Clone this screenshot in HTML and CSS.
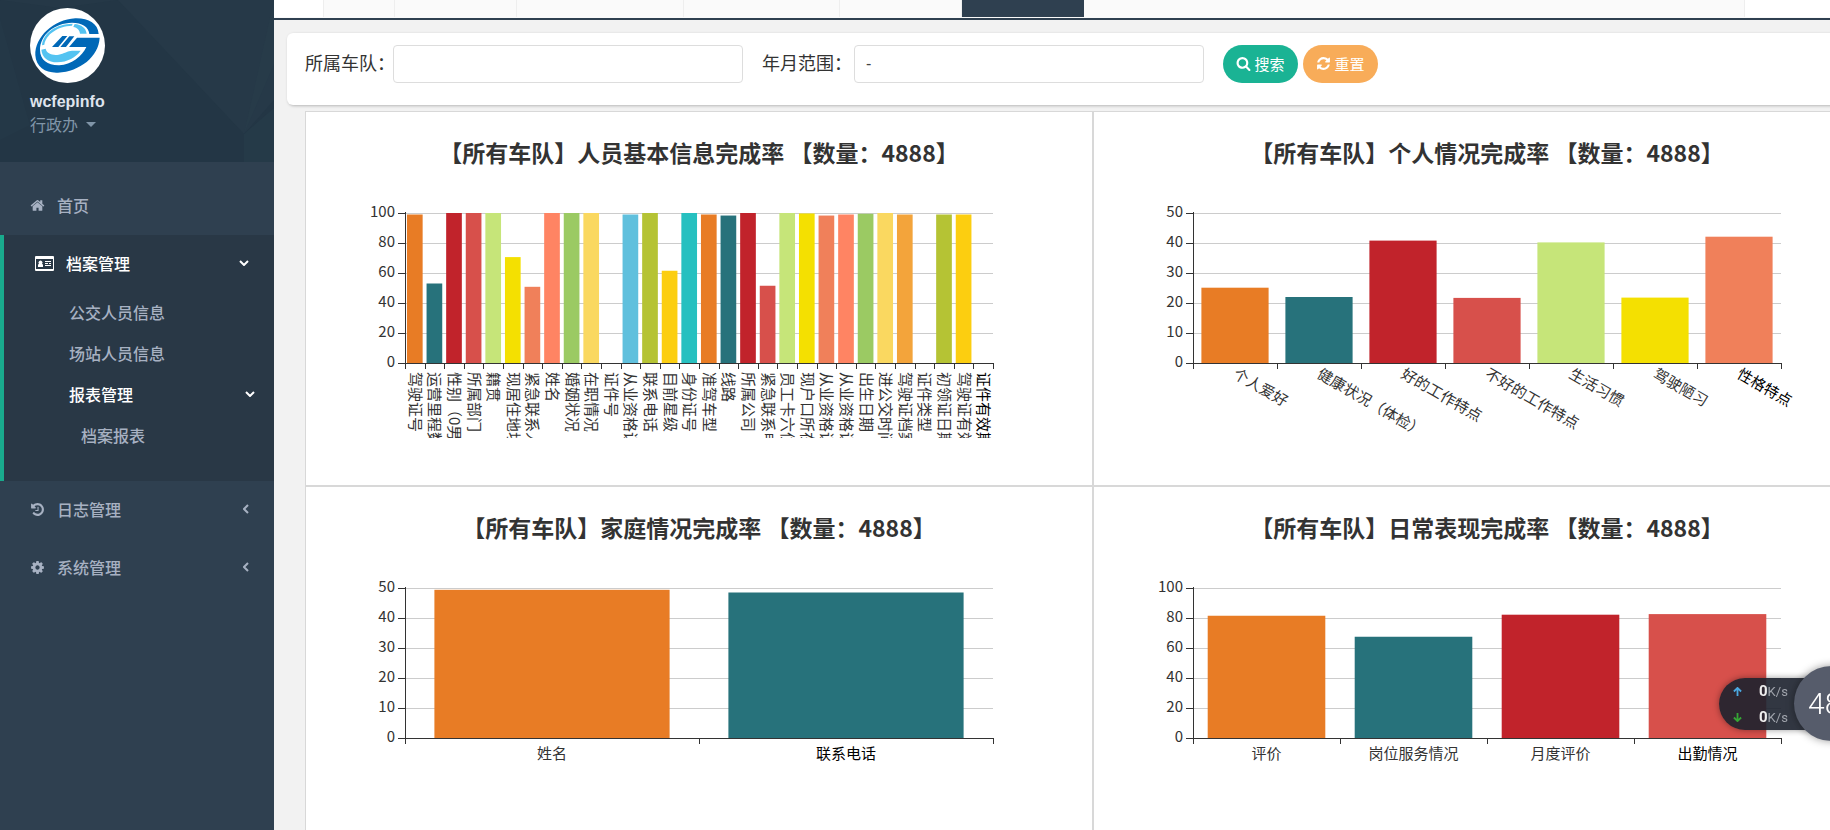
FILE: index.html
```html
<!DOCTYPE html>
<html lang="zh-CN">
<head>
<meta charset="utf-8">
<title>档案报表</title>
<link rel="stylesheet" href="styles.css">
</head>
<body>
<div class="app">
  <aside class="sidebar">
    <header class="profile">
      <svg class="profile-pattern" viewBox="0 0 274 162" preserveAspectRatio="none" aria-hidden="true">
        <rect width="274" height="162" fill="#233645"/>
        <path d="M118 0H274V100L244 134Z" fill="#263948"/>
        <path d="M244 134L274 108V162H244Z" fill="#253a48"/>
        <path d="M0 18L30 125L0 140Z" fill="#243847"/>
        <path d="M274 0V64L244 134Z" fill="#273b49"/>
        <path d="M0 0H118L60 8Z" fill="#253847"/>
      </svg>
      <svg class="logo" viewBox="90 24 225 225" role="img" aria-label="logo">
        <circle cx="202.500" cy="136.500" r="112.500" fill="#fff"/>
        <path fill="#0068b7" d="M296 102C294 70 265 54 226 55C160 58 104 112 106 166C108 202 138 220 174 218C240 214 296 170 299 113H231L207 141H259C246 170 214 194 178 196C144 197 120 180 120 150C120 104 164 69 216 68C246 68 266 80 268 102Z"/>
        <path fill="#54c3f1" d="M126 136C130 98 168 72 218 71L216 77C172 79 138 103 133 134ZM224 72C244 74 258 84 260 101H240C239 91 232 83 220 81ZM124 149L137 146C140 160 156 167 176 164C192 161 204 152 216 152H242C228 172 202 186 172 187C144 187 126 172 124 149Z"/>
        <path fill="#0068b7" d="M187 108H202L175 141H156ZM208 109H223L198 141H181Z"/>
      </svg>
      <strong class="user-name">wcfepinfo</strong>
      <a class="user-role" href="#">行政办 <span class="caret"></span></a>
    </header>
    <nav class="menu">
      <a class="item" href="#">
        <svg class="icon" viewBox="0 0 1792 1792"><path d="M1472 992v480q0 26-19 45t-45 19h-384v-384h-256v384h-384q-26 0-45-19t-19-45v-480q0-1 .5-3t.5-3l575-474 575 474q1 2 1 6zm223-69l-62 74q-8 9-21 11h-3q-13 0-21-7l-692-577-692 577q-12 8-24 7-13-2-21-11l-62-74q-8-10-7-23.5t11-21.5l719-599q32-26 76-26t76 26l244 204v-195q0-14 9-23t23-9h192q14 0 23 9t9 23v408l219 182q10 8 11 21.5t-7 23.5z"/></svg>
        <span>首页</span>
      </a>
      <div class="group">
        <a class="item on" href="#">
          <svg class="icon wide" viewBox="0 0 19 15"><path fill-rule="evenodd" d="M1 0H18Q19 0 19 1V14Q19 15 18 15H1Q0 15 0 14V1Q0 0 1 0ZM1 3V13H18V3ZM3 11V9Q3 8 4 8A2 2 0 1 1 7 8Q8 8 8 9V11ZM10 5H16V6H10ZM10 7H13V8H10ZM14 7H16V8H14ZM10 9H16V10H10Z"/></svg>
          <span>档案管理</span>
          <svg class="arrow down" viewBox="0 0 10 6"><path d="M1 1L5 5L9 1"/></svg>
        </a>
        <a class="item sub" href="#">公交人员信息</a>
        <a class="item sub" href="#">场站人员信息</a>
        <a class="item sub on" href="#"><span>报表管理</span>
          <svg class="arrow down" viewBox="0 0 10 6"><path d="M1 1L5 5L9 1"/></svg>
        </a>
        <a class="item sub third" href="#">档案报表</a>
      </div>
      <a class="item" href="#">
        <svg class="icon" viewBox="0 0 1792 1792"><path d="M1664 896q0 156-61 298t-164 245-245 164-298 61q-172 0-327-72.5t-264-204.5q-7-10-6.5-22.5t8.5-20.5l137-138q10-9 25-9 16 2 23 12 73 95 179 147t225 52q104 0 198.5-40.5t163.5-109.5 109.5-163.5 40.5-198.5-40.5-198.5-109.5-163.5-163.5-109.5-198.5-40.5q-98 0-188 35.5t-160 101.5l137 138q31 30 14 69-17 40-59 40h-448q-26 0-45-19t-19-45v-448q0-42 40-59 39-17 69 14l130 129q107-101 244.5-156.5t284.5-55.5q156 0 298 61t245 164 164 245 61 298zm-640-288v448q0 14-9 23t-23 9h-320q-14 0-23-9t-9-23v-64q0-14 9-23t23-9h224v-352q0-14 9-23t23-9h64q14 0 23 9t9 23z"/></svg>
        <span>日志管理</span>
        <svg class="arrow left" viewBox="0 0 6 10"><path d="M5 1L1 5L5 9"/></svg>
      </a>
      <a class="item" href="#">
        <svg class="icon" viewBox="0 0 1792 1792"><path d="M1152 896q0-106-75-181t-181-75-181 75-75 181 75 181 181 75 181-75 75-181zm512-109v222q0 12-8 23t-20 13l-185 28q-19 54-39 91 35 50 107 138 10 12 10 25t-9 23q-27 37-99 108t-94 71q-12 0-26-9l-138-108q-44 23-91 38-16 136-29 186-7 28-36 28h-222q-14 0-24.5-8.5t-11.5-21.5l-28-184q-49-16-90-37l-141 107q-10 9-25 9-14 0-25-11-126-114-165-168-7-10-7-23 0-12 8-23 15-21 51-66.5t54-70.5q-27-50-41-99l-183-27q-13-2-21-12.5t-8-23.5v-222q0-12 8-23t19-13l186-28q14-46 39-92-40-57-107-138-10-12-10-24 0-10 9-23 26-36 98.5-107.5t94.500-71.500q13 0 26 10l138 107q44-23 91-38 16-136 29-186 7-28 36-28h222q14 0 24.5 8.5t11.5 21.5l28 184q49 16 90 37l142-107q9-9 24-9 13 0 25 10 129 119 165 170 7 8 7 22 0 12-8 23-15 21-51 66.5t-54 70.5q26 50 41 98l183 28q13 2 21 12.5t8 23.5z"/></svg>
        <span>系统管理</span>
        <svg class="arrow left" viewBox="0 0 6 10"><path d="M5 1L1 5L5 9"/></svg>
      </a>
    </nav>
  </aside>

  <main class="main">
    <div class="tabs">
      <span class="tab-end"></span>
      <span class="tab small"></span>
      <span class="tab mid"></span>
      <span class="tab large"></span>
      <span class="tab regular"></span>
      <span class="tab mid"></span>
      <span class="tab mid active"></span>
      <span class="tab-end right"></span>
    </div>

    <form class="search">
      <label for="fleet">所属车队：</label>
      <input id="fleet" class="field" type="text">
      <label for="range" class="second">年月范围：</label>
      <input id="range" class="field" type="text" placeholder="-">
      <button type="button" class="btn green">
        <svg viewBox="0 0 1792 1792"><path d="M1216 832q0-185-131.5-316.5t-316.5-131.5-316.5 131.5-131.5 316.5 131.5 316.5 316.5 131.5 316.5-131.5 131.5-316.5zm512 832q0 52-38 90t-90 38q-54 0-90-38l-343-342q-179 124-399 124-143 0-273.5-55.5t-225-150-150-225-55.5-273.5 55.5-273.5 150-225 225-150 273.5-55.5 273.5 55.5 225 150 150 225 55.5 273.5q0 220-124 399l343 343q37 37 37 90z"/></svg>
        <span>搜索</span>
      </button>
      <button type="button" class="btn orange">
        <svg viewBox="0 0 1792 1792"><path d="M1639 1056q0 5-1 7-64 268-268 434.5t-478 166.5q-146 0-282.5-55t-243.5-157l-129 129q-19 19-45 19t-45-19-19-45v-448q0-26 19-45t45-19h448q26 0 45 19t19 45-19 45l-137 137q71 66 161 102t187 36q134 0 250-65t186-179q11-17 53-117 8-23 30-23h192q13 0 22.5 9.5t9.5 22.5zm25-800v448q0 26-19 45t-45 19h-448q-26 0-45-19t-19-45 19-45l138-138q-148-137-349-137-134 0-250 65t-186 179q-11 17-53 117-8 23-30 23h-199q-13 0-22.5-9.5t-9.5-22.5v-7q65-268 270-434.5t480-166.500q146 0 284 55.5t245 156.5l130-129q19-19 45-19t45 19 19 45z"/></svg>
        <span>重置</span>
      </button>
    </form>

    <div class="charts">
      <section class="chart"><h2>【所有车队】人员基本信息完成率 【数量：4888】</h2><svg class="plot" id="basic"></svg></section>
      <section class="chart"><h2>【所有车队】个人情况完成率 【数量：4888】</h2><svg class="plot" id="personal"></svg></section>
      <section class="chart"><h2>【所有车队】家庭情况完成率 【数量：4888】</h2><svg class="plot" id="family"></svg></section>
      <section class="chart"><h2>【所有车队】日常表现完成率 【数量：4888】</h2><svg class="plot" id="daily"></svg></section>
    </div>
  </main>
</div>

<div class="monitor">
  <div class="speeds">
    <div class="speed"><svg class="up" viewBox="0 0 10 10"><path d="M5 10V2M1 5L5 1L9 5"/></svg><b>0</b><span>K/s</span></div>
    <div class="speed"><svg class="dn" viewBox="0 0 10 10"><path d="M5 0V8M1 5L5 9L9 5"/></svg><b>0</b><span>K/s</span></div>
  </div>
  <div class="ball">48</div>
</div>
<script src="charts.js"></script>
</body>
</html>
```
FILE: styles.css
```css
* { box-sizing: border-box; }
body {
  margin: 0;
  height: 100vh;
  overflow: hidden;
  background: #f2f2f2;
  color: #333;
  font-family: "Noto Sans CJK SC", sans-serif;
  font-size: 16px;
}
a { color: inherit; text-decoration: none; }
.app { display: flex; height: 100vh; }

/* sidebar */
.sidebar { flex: 0 0 274px; background: #2f4050; color: #a7b1c2; }
.profile {
  position: relative;
  display: flex;
  flex-direction: column;
  align-items: flex-start;
  height: 162px;
  padding: 8px 30px;
}
.profile-pattern { position: absolute; inset: 0; width: 100%; height: 100%; }
.logo { position: relative; width: 75px; height: 75px; }
.user-name {
  position: relative;
  margin-top: 7px;
  color: #dfe4ed;
  font: bold 16px/24px "Liberation Sans", sans-serif;
}
.user-role {
  position: relative;
  display: flex;
  align-items: center;
  gap: 8px;
  line-height: 20px;
  color: #8095a8;
}
.caret { border: 5px solid transparent; border-top-color: currentColor; border-bottom: 0; }
.menu { padding-top: 15px; font-weight: 500; }
.item {
  display: flex;
  align-items: center;
  height: 58px;
  padding: 0 25px 2px 30px;
}
.icon { width: 15px; height: 15px; margin-right: 12px; fill: currentColor; }
.icon.wide { width: 19px; height: 15px; margin-left: 1px; margin-right: 12px; }
.group { padding-bottom: 24px; border-left: 4px solid #19aa8d; background: #293846; }
.group .item.on { color: #fff; }
.sub { height: 41px; padding: 0 19px 4px 65px; }
.sub.third { padding-left: 77px; }
.arrow { margin-left: auto; fill: none; stroke: currentColor; stroke-width: 2; }
.arrow.down { width: 10px; height: 6px; }
.arrow.left { width: 6px; height: 10px; }

/* tabs */
.main { flex: 1; min-width: 0; }
.tabs {
  display: flex;
  height: 20px;
  padding-bottom: 1px;
  border-bottom: 2px solid #2f4050;
  background: #fafafa;
}
.tab, .tab-end { border-right: 1px solid #eee; }
.tab-end { width: 50px; background: #fff; }
.tab-end.right { width: 86px; margin-left: auto; border-right: 0; border-left: 1px solid #eee; }
.tab.small { width: 71px; }
.tab.mid { width: 122px; }
.tab.large { width: 167px; }
.tab.regular { width: 156px; }
.tab.active { background: #2f4050; border: 0; }

/* search form */
.search {
  display: flex;
  align-items: flex-start;
  height: 72px;
  margin: 13px -30px 0 13px;
  padding: 12px 18px;
  border-radius: 6px;
  background: #fff;
  box-shadow: 1px 1px 3px rgba(0, 0, 0, .25);
}
.search label { width: 88px; font-size: 18px; line-height: 34px; white-space: nowrap; }
.search .second { width: 92px; margin-left: 19px; }
.field {
  width: 350px;
  height: 38px;
  padding: 0 11px;
  border: 1px solid #ddd;
  border-radius: 4px;
  background: #fff;
  font: 16px "Liberation Sans", "Noto Sans CJK SC", sans-serif;
}
.field::placeholder { color: #444; }
.btn {
  display: flex;
  align-items: center;
  justify-content: center;
  gap: 3px;
  width: 75px;
  height: 38px;
  margin-left: 5px;
  padding: 0 0 2px;
  border: 0;
  border-radius: 19px;
  color: #fff;
  font: 15px "Noto Sans CJK SC", sans-serif;
}
.btn svg { width: 15px; height: 15px; fill: currentColor; }
.btn.green { margin-left: 19px; background: #1ab394; }
.btn.orange { background: #f8ac59; }

/* charts */
.charts {
  display: grid;
  grid-template-columns: 1fr 1fr;
  margin: 6px -51px 0 31px;
  background: #fff;
}
.chart { min-width: 0; height: 375px; border: 1px solid #d8d8d8; }
.chart h2 {
  margin: 0;
  padding-top: 25px;
  padding-bottom: 1px;
  font-size: 23px;
  line-height: 30px;
  text-align: center;
  white-space: nowrap;
}
.plot { display: block; width: 100%; }
.grid-line { stroke: #ccc; shape-rendering: crispEdges; }
.axis { stroke: #333; shape-rendering: crispEdges; }
.plot text { fill: #333; font-size: 15px; }
.plot .last { fill: #000; }

/* floating network monitor */
.monitor {
  position: fixed;
  right: -39px;
  top: 666px;
  display: flex;
  align-items: center;
  font-family: Roboto, sans-serif;
}
.speeds {
  width: 112px;
  height: 52px;
  margin-right: -37px;
  border-radius: 26px 0 0 26px;
  background: rgba(28, 33, 45, .9);
  box-shadow: 0 0 6px rgba(0, 0, 0, .4);
}
.speed {
  display: flex;
  align-items: baseline;
  height: 26px;
  padding-left: 14px;
  line-height: 26px;
  color: #a0a4ac;
  font-size: 13px;
}
.speed b { margin-left: 17px; color: #eee; font-size: 15px; }
.speed svg { width: 9px; height: 9px; fill: none; stroke-width: 2; }
.up { stroke: #4aa8e0; }
.dn { stroke: #35a535; }
.ball {
  width: 75px;
  height: 75px;
  padding-left: 14px;
  border-radius: 50%;
  background: #565c6b;
  box-shadow: 0 0 8px rgba(0, 0, 0, .4);
  color: #fff;
  font-size: 30px;
  font-weight: 300;
  line-height: 75px;
}
```
FILE: charts.js
```js
const COLORS = ['#E87C25', '#27727B', '#C1232B', '#D7504B', '#C6E579', '#F4E001', '#F0805A', '#FF8463',
  '#9BCA63', '#FAD860', '#F3A43B', '#60C0DD', '#B5C334', '#FCCE10', '#26C0C0'];
const LEFT = 99, WIDTH = 588, TOP = 101, BASE = 251;

function drawChart(id, max, rows, rotate) {
  const step = max / 5, size = WIDTH / rows.length;
  let out = `<defs><clipPath id="clip-${id}"><rect x="0" y="0" width="786" height="326"/></clipPath></defs>`;
  for (let v = 0; v <= 5; v++) {
    const y = BASE - v * 30;
    if (v) out += `<line class="grid-line" x1="${LEFT}" x2="${LEFT + WIDTH}" y1="${y}" y2="${y}"/>`;
    out += `<text x="89" y="${y + 4}" text-anchor="end">${v * step}</text>`;
  }
  rows.forEach(([, value], i) => {
    const h = value / max * (BASE - TOP);
    out += `<rect x="${LEFT + size * (i + .1)}" y="${BASE - h}" width="${size * .8}" height="${h}" fill="${COLORS[i % 15]}"/>`;
  });
  out += `<path class="axis" fill="none" d="M${LEFT} ${TOP - 1}V${BASE}H${LEFT + WIDTH}`;
  for (let v = 0; v <= 5; v++) out += `M${LEFT} ${BASE - v * 30}h-7`;
  for (let i = 0; i <= rows.length; i++) out += `M${Math.round(LEFT + size * i)} ${BASE}v6`;
  out += '"/>';
  out += `<g clip-path="url(#clip-${id})">`;
  rows.forEach(([name], i) => {
    const x = LEFT + size * (i + .5), cls = i === rows.length - 1 ? ' class="last"' : '';
    if (rotate === 90) out += `<text${cls} transform="translate(${x - 5} 260) rotate(90)">${name}</text>`;
    else if (rotate) out += `<text${cls} transform="translate(${x - 3} 265) rotate(${rotate})">${name}</text>`;
    else out += `<text${cls} x="${x}" y="272" text-anchor="middle">${name}</text>`;
  });
  out += '</g>';
  const svg = document.getElementById(id);
  svg.setAttribute('viewBox', '0 56 786 317');
  svg.innerHTML = out;
}

drawChart('basic', 100, [
  ['驾驶证号', 99], ['运营里程数', 53], ['性别（0男', 100], ['所属部门', 100], ['籍贯', 100],
  ['现居住地址', 70.6], ['紧急联系人', 50.8], ['姓名', 100], ['婚姻状况', 100], ['在职情况', 100],
  ['证件号', 0], ['从业资格证', 99], ['联系电话', 100], ['目前星级', 61.5], ['身份证号', 100],
  ['准驾车型', 99], ['线路', 98.3], ['所属公司', 100], ['紧急联系电', 51.5], ['员工卡六位', 100],
  ['现户口所在', 99.7], ['从业资格证', 98.3], ['从业资格证', 99], ['出生日期', 99.5], ['进公交时间', 100],
  ['驾驶证档案', 99], ['证件类型', 0], ['初领证日期', 99], ['驾驶证有效', 99], ['证件有效期', 0]
], 90);
drawChart('personal', 50, [
  ['个人爱好', 25.1], ['健康状况（体检）', 22], ['好的工作特点', 40.8], ['不好的工作特点', 21.7],
  ['生活习惯', 40.2], ['驾驶陋习', 21.8], ['性格特点', 42.1]
], 30);
drawChart('family', 50, [['姓名', 49.4], ['联系电话', 48.5]], 0);
drawChart('daily', 100, [['评价', 81.5], ['岗位服务情况', 67.5], ['月度评价', 82.2], ['出勤情况', 82.6]], 0);
```
